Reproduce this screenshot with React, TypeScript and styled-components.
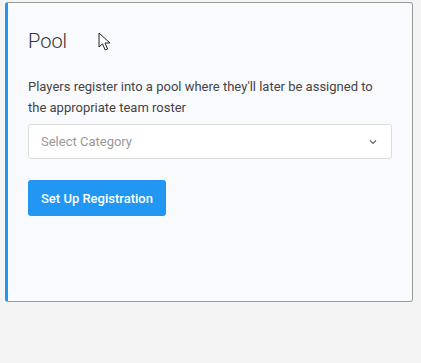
import React from "react";
import styled, { createGlobalStyle } from "styled-components";

const GlobalStyle = createGlobalStyle`
  html, body {
    margin: 0;
    padding: 0;
    background: #f4f4f4;
    font-family: Roboto, "Liberation Sans", Arial, sans-serif;
  }
`;

const App = () => {
  return (
    <Page>
      <GlobalStyle />
      <Card>
        <Title>Pool</Title>
        <Description>
          Players register into a pool where they'll later be assigned to the
          appropriate team roster
        </Description>
        <Select>
          <Placeholder>Select Category</Placeholder>
          <svg width="8" height="6" viewBox="0 0 8 6">
            <path d="M1 1.5 L4 4.5 L7 1.5" fill="none" stroke="#666" strokeWidth="1.2" />
          </svg>
        </Select>
        <Button>Set Up Registration</Button>
        <Cursor width="14" height="20" viewBox="0 0 14 20">
          <path
            d="M1 1 L1 15 L4.5 11.8 L7.2 18 L9.6 17 L7 11 L12 11 Z"
            fill="#fff"
            stroke="#222"
            strokeWidth="1"
            strokeLinejoin="round"
          />
        </Cursor>
      </Card>
    </Page>
  );
};

const Page = styled.div`
  padding: 2px 8px 60px 5px;
  min-height: 363px;
  box-sizing: border-box;
`;

const Card = styled.div`
  position: relative;
  height: 300px;
  box-sizing: border-box;
  background: #f9fafe;
  border: 1px solid #9a9a9a;
  border-left: 3px solid #2196f3;
  border-radius: 3px;
  padding: 26px 20px 20px 20px;
  display: flex;
  flex-direction: column;
  align-items: flex-start;
`;

const Title = styled.div`
  font-size: 20px;
  font-weight: 300;
  color: #333;
  line-height: 24px;
  margin-bottom: 23px;
`;

const Description = styled.div`
  font-size: 13px;
  color: #444;
  line-height: 21px;
  margin-bottom: 6px;
`;

const Select = styled.div`
  align-self: stretch;
  height: 35px;
  box-sizing: border-box;
  background: #fff;
  border: 1px solid #dcdcdc;
  border-radius: 3px;
  padding: 0 14px 0 12px;
  display: flex;
  align-items: center;
  justify-content: space-between;
  margin-bottom: 21px;
`;

const Placeholder = styled.span`
  font-size: 13px;
  color: #999;
`;

const Button = styled.div`
  height: 36px;
  padding: 0 13px;
  display: flex;
  align-items: center;
  background: #2196f3;
  border-radius: 3px;
  color: #fff;
  font-size: 13px;
  font-weight: 500;
  cursor: pointer;
`;

const Cursor = styled.svg`
  position: absolute;
  left: 90px;
  top: 29px;
`;

export default App;
